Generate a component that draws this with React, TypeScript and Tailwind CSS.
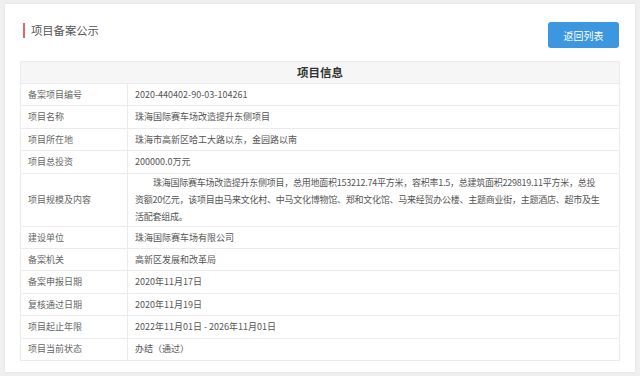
import type { ReactNode } from "react";

const font = { fontFamily: '"Microsoft YaHei", "Noto Sans CJK SC", "Noto Sans", sans-serif' };

interface RowProps {
  label: string;
  children: ReactNode;
  tall?: boolean;
}

const Row = ({ label, children, tall }: RowProps) => {
  return (
    <div
      className={`flex border-b border-[#ebebeb] ${tall ? "h-[53px]" : "h-[22.4px]"}`}
    >
      <div className="w-[107px] shrink-0 border-r border-[#ebebeb] pl-[7px] flex items-center text-[9px] text-[#666]">
        {label}
      </div>
      <div className="flex-1 pl-[7px] pr-[6px] flex items-center text-[9px] text-[#555]">
        {children}
      </div>
    </div>
  );
};

export default function App() {
  return (
    <div className="w-[640px] h-[376px] bg-[#efefef] pt-[4px] px-[5px]" style={font}>
      <div className="h-[368px] bg-white shadow-[0_0_2px_rgba(0,0,0,0.08)] px-[15px] pt-[17px]">
        {/* 标题栏 */}
        <div className="flex items-start justify-between pr-px">
          <div className="flex items-center pl-[3px] h-[17px] mt-px">
            <span className="w-[2px] h-[15px] bg-[#e46a5e]"></span>
            <span className="ml-[6px] text-[11.3px] text-[#555] leading-none">项目备案公示</span>
          </div>
          <button className="mt-px w-[71px] h-[26px] rounded-[3px] bg-[#3c97e0] text-white text-[10px]">
            返回列表
          </button>
        </div>

        {/* 项目信息表 */}
        <div className="mt-[13px] border border-[#ebebeb] border-b-0">
          <div className="h-[22px] bg-[#f6f6f6] border-b border-[#ebebeb] flex items-center justify-center text-[11.5px] font-bold text-[#333]">
            项目信息
          </div>
          <Row label="备案项目编号">2020-440402-90-03-104261</Row>
          <Row label="项目名称">珠海国际赛车场改造提升东侧项目</Row>
          <Row label="项目所在地">珠海市高新区哈工大路以东，金园路以南</Row>
          <Row label="项目总投资">200000.0万元</Row>
          <Row label="项目规模及内容" tall>
            <p className="leading-[17px] whitespace-nowrap tracking-[-0.25px]">
              <span className="block pl-[18px]">
                珠海国际赛车场改造提升东侧项目，总用地面积153212.74平方米，容积率1.5，总建筑面积229819.11平方米，总投
              </span>
              <span className="block">
                资额20亿元，该项目由马来文化村、中马文化博物馆、郑和文化馆、马来经贸办公楼、主题商业街，主题酒店、超市及生
              </span>
              <span className="block">活配套组成。</span>
            </p>
          </Row>
          <Row label="建设单位">珠海国际赛车场有限公司</Row>
          <Row label="备案机关">高新区发展和改革局</Row>
          <Row label="备案申报日期">2020年11月17日</Row>
          <Row label="复核通过日期">2020年11月19日</Row>
          <Row label="项目起止年限">2022年11月01日 - 2026年11月01日</Row>
          <Row label="项目当前状态">办结（通过）</Row>
        </div>
      </div>
    </div>
  );
}
